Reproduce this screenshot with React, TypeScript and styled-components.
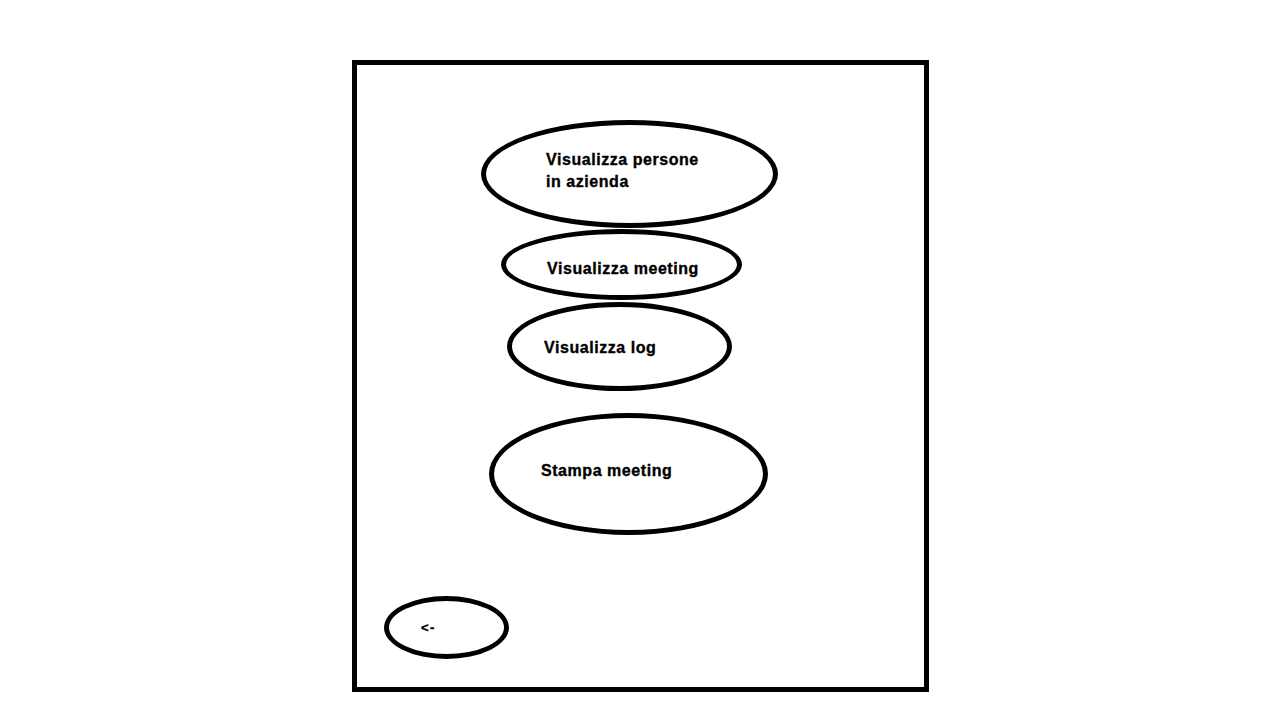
import React from "react";
import styled, { createGlobalStyle } from "styled-components";

const Global = createGlobalStyle`
  html, body {
    margin: 0;
    padding: 0;
    background: #ffffff;
  }
  body {
    font-family: "Liberation Sans", Arial, sans-serif;
    color: #000000;
  }
`;

const Page = styled.div`
  width: 1264px;
  height: 717px;
  padding: 60px 0 0 352px;
  box-sizing: border-box;
`;

const Frame = styled.div`
  width: 577px;
  height: 632px;
  border: 5px solid #000000;
  box-sizing: border-box;
  display: flex;
  flex-direction: column;
  align-items: flex-start;
`;

const Bubble = styled.div<{
  $w: number;
  $h: number;
  $ml: number;
  $mt: number;
  $pl: number;
  $dy: number;
}>`
  width: ${(p) => p.$w}px;
  height: ${(p) => p.$h}px;
  margin-left: ${(p) => p.$ml}px;
  margin-top: ${(p) => p.$mt}px;
  padding-left: ${(p) => p.$pl}px;
  padding-top: ${(p) => (p.$dy > 0 ? p.$dy * 2 : 0)}px;
  padding-bottom: ${(p) => (p.$dy < 0 ? -p.$dy * 2 : 0)}px;
  box-sizing: border-box;
  border: 5px solid #000000;
  border-radius: 50%;
  display: flex;
  align-items: center;
  flex-shrink: 0;
`;

const Label = styled.span<{ $small?: boolean }>`
  font-family: "Liberation Sans", Arial, sans-serif;
  font-weight: 700;
  font-size: ${(p) => (p.$small ? 13 : 16)}px;
  line-height: 22px;
  letter-spacing: ${(p) => (p.$small ? 1.5 : 0.55)}px;
  -webkit-text-stroke: 0.35px #000000;
  color: #000000;
  white-space: pre-line;
`;

const items = [
  { text: "Visualizza persone\nin azienda", w: 297, h: 108, ml: 124, mt: 55, pl: 60, dy: -3 },
  { text: "Visualizza meeting", w: 241, h: 71, ml: 144, mt: 1, pl: 41, dy: 4 },
  { text: "Visualizza log", w: 225, h: 89, ml: 150, mt: 2, pl: 32, dy: 1 },
  { text: "Stampa meeting", w: 279, h: 122, ml: 132, mt: 22, pl: 47, dy: -3 },
];

export default function App() {
  return (
    <>
      <Global />
      <Page>
        <Frame>
          {items.map((it) => (
            <Bubble
              key={it.text}
              $w={it.w}
              $h={it.h}
              $ml={it.ml}
              $mt={it.mt}
              $pl={it.pl}
              $dy={it.dy}
            >
              <Label>{it.text}</Label>
            </Bubble>
          ))}
          <Bubble $w={125} $h={63} $ml={27} $mt={61} $pl={32} $dy={0}>
            <Label $small>{"<-"}</Label>
          </Bubble>
        </Frame>
      </Page>
    </>
  );
}
